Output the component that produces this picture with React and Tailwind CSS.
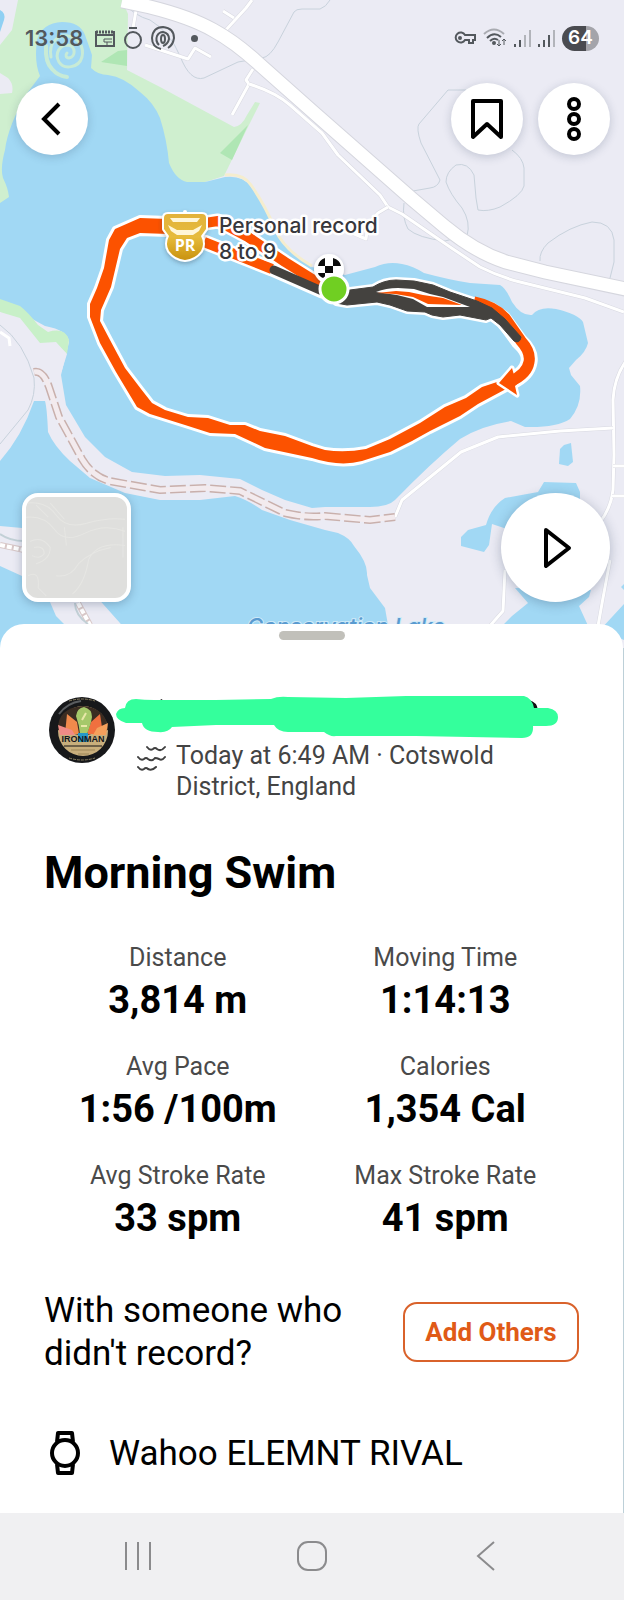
import React from 'react';

const stats = [
    { label: 'Distance', value: '3,814 m' },
    { label: 'Moving Time', value: '1:14:13' },
    { label: 'Avg Pace', value: '1:56 /100m' },
    { label: 'Calories', value: '1,354 Cal' },
    { label: 'Avg Stroke Rate', value: '33 spm' },
    { label: 'Max Stroke Rate', value: '41 spm' }
];

const MAIN_ROAD = 'M122 1 L150 7 Q190 17 213 30 Q235 42 258 63 L312 111 L412 199 L444 226 Q475 252 506 262 L545 272 L630 290';
const SIDE_ROADS = [
    'M137 5 L133 28',
    'M252 0 L246 8 L225 31 M223 11 L234 18',
    'M145 45 L188 59 L195 48 L211 57',
    'M253 69 L246 80 L249 84 L232 115',
    'M249 84 Q275 92 290 105 L322 133 L338 155 L380 195 L388 207 L402 214 L450 247 L480 267 Q500 277 520 282 L585 298 L624 312',
    'M388 207 L378 213 L368 224 L366 239 L352 233',
    'M626 361 Q614 378 613 400 L614 455 L613 490 Q611 508 600 522',
    'M613 428 L560 431 L498 437 L461 452 L402 500 L395 517',
    'M505 570 L503 611 L488 628',
    'M610 560 L603 598 L598 626',
    'M613 466 H626 M612 496 H626'
];
const BOUNDARIES = [
    'M122 2 Q135 16 150 20 Q170 32 180 56 Q190 82 204 78 L238 62 L262 58 Q270 57 278 42 L294 12 Q296 9 302 9 L320 9 Q326 7 330 0',
    'M466 90 H448 L419 124 Q416 128 421 143 L440 180 Q438 187 430 188 L413 191',
    'M512 150 Q523 158 524 168 V186 Q522 195 500 207 Q488 212 478 210 L476 198 L474 175 Q468 162 456 165 Q446 172 446 182 Q450 194 462 208 Q471 222 467 236',
    'M404 203 Q402 218 408 229 Q418 238 445 241 L464 236',
    'M540 261 Q539 252 548 243 Q570 226 592 222 Q612 222 614 240 V262 L610 278',
    'M0 325 Q24 342 34 378 Q36 395 28 410 L0 444'
];
const TRACK = 'M34 372 Q43 370 49 387 L59 417 L82 459 Q92 476 109 481 L160 490 L205 488 L240 491 L285 513 Q305 518 325 516 L370 520 L395 517';
const LOOP =
    'M168 219 L140 218 L115 229 L109 240 L104 268 L97 288 L90 304 L90 317 L100 343 L116 372 L137 407 L150 414 L185 425 L210 433 L235 434 L265 448 L312 458 Q340 467 362 461 L390 452 L412 441 L430 431 L460 416 L478 404 L506 389 L503 380 L482 387 L466 398 L445 407 L420 423 L390 439 L366 449 Q345 453 325 450 L312 446 L285 436 L260 431 L245 425 L230 425 L208 418 L188 417 L165 410 L152 403 L141 389 L125 368 L110 340 L100 321 L101 310 L111 287 L120 249 L127 238 L140 233 L168 234 Z';
const DARK_LEG =
    'M338 293 L350 290 L373 287 Q384 280 396 280 L414 281 L433 285 L450 292 L477 301 L492 308 L505 319 L521 337 Q520 344 514 341 L500 325 L491 318 L486 320 L460 315 L443 317 L432 315 L425 312 L407 311 L390 305 L377 302 L347 305 L336 303 Z';

const IconButton = ({ label, children }) => (
    <button
        aria-label={label}
        className="flex size-[72px] items-center justify-center rounded-full bg-white shadow-[0_2px_10px_rgba(40,60,90,0.22)]"
    >
        {children}
    </button>
);

const RouteMap = () => (
    <svg
        className="absolute inset-0 size-full"
        viewBox="0 0 624 648"
        preserveAspectRatio="xMidYMin slice"
        role="img"
        aria-label="Swim route"
    >
        <defs>
            <linearGradient id="gold" x1="0" y1="0" x2="0" y2="1">
                <stop offset="0" stopColor="#e2b23a" />
                <stop offset="0.5" stopColor="#e6bb3c" />
                <stop offset="1" stopColor="#c9920f" />
            </linearGradient>
            <filter id="drop" x="-30%" y="-30%" width="160%" height="170%">
                <feDropShadow dx="0" dy="2" stdDeviation="2" floodColor="#345" floodOpacity="0.35" />
            </filter>
        </defs>

        <rect width="624" height="648" fill="#ebebf4" />

        {/* Parkland */}
        <path d="M18 0 L122 0 L128 14 L127 70 L160 87 L234 127 Q242 126 247 115 L255 102 L260 103 L245 133 L224 176 L180 190 L0 210 V94 L12 93 Q14 84 8 78 L0 73 V45 L12 30 Z" fill="#cfefcf" />
        <path d="M101 62 L118 51 L127 50 V66 Z M248 125 L232 160 L220 153 L230 143 Z" fill="#afe6b4" />
        <path d="M0 10 Q6 13 4 20 L0 32 Z" fill="#8fd0f3" />

        {/* Main lake */}
        <path
            d="M37 40 Q42 23 62 22 Q80 22 85 35 Q89 46 92 55 L91 68 Q98 75 108 75 Q124 77 140 92 Q154 103 160 118 Q167 140 169 163 Q176 180 187 182 L205 182 L225 177 Q243 175 251 187 Q265 205 275 229 Q284 250 312 267 L345 275 L375 267 Q388 261 402 264 Q413 266 424 273 Q450 280 470 283 L500 285 Q506 288 512 302 Q521 316 532 315 Q539 306 556 309 Q578 314 583 322 L588 343 Q586 352 576 360 L569 368 L571 375 L580 386 Q582 405 570 419 Q556 428 525 427 L511 421 Q480 426 460 439 Q430 464 395 500 Q388 507 370 507 L325 507 L312 508 L285 500 L262 490 L240 479 L200 475 L165 476 L132 472 L105 457 L85 437 L66 405 L61 375 L69 342 Q68 330 45 326 L25 315 L0 300 V203 L9 197 Q8 188 3 178 Q0 168 5 150 Q8 125 28 92 L40 76 Q34 62 37 40 Z"
            fill="#a1d8f4"
        />
        <path d="M46 46 Q45 62 52 69 Q58 76 67 77" fill="none" stroke="#c8ebd6" strokeWidth="4" strokeLinecap="round" />
        <path d="M51 57 C48 40 60 35 68 36 C80 38 84 48 82 57 C79 68 64 70 59 62 C54 53 60 45 68 45 C76 46 76 57 69 58 C66 58 65 55 67 53" fill="none" stroke="#c8ebd6" strokeWidth="3" strokeLinecap="round" />
        <path d="M225 175 Q243 173 251 185 Q265 205 275 229 Q284 250 312 266" fill="none" stroke="#f5edce" strokeWidth="3" />

        {/* West shore */}
        <path d="M0 299 L20 306 Q28 312 38 325 L48 332 Q65 327 69 340 L67 354 L55 343 L41 345 L25 328 L0 312 Z" fill="#c8f0c8" />
        <path d="M0 312 L20 318 L40 343 L56 342 L67 354 L62 370 L50 400 L0 470 Z" fill="#ebebf4" />

        {/* Conservation Lake */}
        <path d="M0 461 Q22 436 34 401 L45 401 Q47 408 48 432 Q54 446 70 461 L90 478 L125 493 L160 500 L200 500 L235 496 Q248 500 262 510 L290 520 L325 530 L338 533 Q350 538 354 546 Q368 563 367 575 L370 588 L385 608 L392 648 H0 Z" fill="#a1d8f4" />
        <path d="M0 526 L22 528 L95 595 L128 632 L72 632 L56 616 L50 602 L22 576 L0 566 Z" fill="#ebebf4" />

        {/* Ponds */}
        <path d="M560 449 L564 445 L571 443 L573 462 L568 466 L559 464 Z" fill="#a1d8f4" />
        <path d="M461 537 L468 530 L486 525 Q491 507 505 498 L538 492 L544 482 L576 483 L580 492 V530 L510 530 L492 524 L489 545 L484 552 L461 546 Z" fill="#a1d8f4" />
        <path d="M515 588 L591 590 L589 597 L579 606 L590 630 H498 L512 616 L528 603 Z M600 630 L624 604 V640 Z M621 587 L624 584 V590 Z" fill="#a1d8f4" />

        {BOUNDARIES.map((d) => (
            <path key={d} d={d} fill="none" stroke="#c8d2dc" strokeWidth="1" />
        ))}
        {SIDE_ROADS.map((d) => (
            <g key={d} fill="none" strokeLinejoin="round">
                <path d={d} stroke="#d8d9e1" strokeWidth="4" />
                <path d={d} stroke="#fff" strokeWidth="3" />
            </g>
        ))}
        <path d={MAIN_ROAD} fill="none" stroke="#d5d6de" strokeWidth="15" />
        <path d={MAIN_ROAD} fill="none" stroke="#fff" strokeWidth="13" />

        {/* Gravel track */}
        <path d={TRACK} fill="none" stroke="#c9b0ac" strokeWidth="8" strokeDasharray="16 4" />
        <path d={TRACK} fill="none" stroke="#f3ebee" strokeWidth="5" />
        <path d="M0 545 L24 550 M78 603 L90 625" fill="none" stroke="#d8c8c8" strokeWidth="6" />
        <path d="M0 545 L24 550 M78 603 L90 625" fill="none" stroke="#fff" strokeWidth="4" strokeDasharray="5 2" />
        <path d="M0 534 Q10 541 24 541 M75 603 Q75 615 88 624" fill="none" stroke="#c2d0d6" strokeWidth="2" />
        <path d="M0 332 L9 338 L10 346" fill="none" stroke="#fff" strokeWidth="3" />

        <text x="247" y="634" className="font-['Inter'] text-[22px] font-medium italic" fill="#5a9bd0" stroke="#cfeaf8" strokeWidth="2" paintOrder="stroke">
            Conservation Lake
        </text>

        {/* White casing under the route */}
        <g fill="none" stroke="#fff" strokeLinejoin="round" strokeLinecap="round">
            <path d={LOOP} strokeWidth="6" />
            <path d="M205 223 L218 221 L248 237 L285 262 L325 287 M204 242 L272 269 L322 291" strokeWidth="15" />
            <path d="M490 310 L503 319 L519 341 Q531 352 529 362 Q527 374 510 382" strokeWidth="17" />
            <path d={DARK_LEG} strokeWidth="6" />
        </g>
        {/* Route */}
        <path d={LOOP} fill="#fc5200" />
        <path d="M512 368 L499 383 L517 395 L515 386 L522 380 L514 375 Z" fill="#fc5200" stroke="#fff" strokeWidth="5" strokeLinejoin="round" paintOrder="stroke" />
        <g fill="none" stroke="#fc5200" strokeWidth="10" strokeLinejoin="round">
            <path d="M205 223 L218 221 L248 237 L285 262 L325 287 M204 242 L272 269" />
            <path d="M474 302 Q494 306 505 318 L521 341 Q531 352 529 362 Q527 374 511 381" strokeWidth="11" />
        </g>
        <g fill="#44423f" stroke="#44423f" strokeLinecap="round" strokeLinejoin="round">
            <path d="M274 270 L322 291" strokeWidth="9" />
            <path d={DARK_LEG} strokeWidth="1" />
        </g>
        <path d="M376 292 Q386 288 398 288 L414 289 L430 294 L443 297 L470 307 L427 307 L413 299 L397 295 Z" fill="#fff" />
        <path d="M377 293 L396 291 L409 292 L423 295 L443 298 L462 305 L428 304 L413 297 L395 294 Z" fill="#fc5200" />

        {/* Finish and start */}
        <g filter="url(#drop)">
            <circle cx="329" cy="269" r="15" fill="#fff" />
        </g>
        <path d="M325 266 H333 V273 H325 Z M325 266 H318 Q319 260 325 258 Z M333 266 V258 Q340 260 341 266 Z M325 273 V279 L321 277 Q318 275 318 273 Z" fill="#0b0b0b" />
        <circle cx="334" cy="289" r="14" fill="#70cf22" stroke="#fff" strokeWidth="3" />

        {/* PR badge */}
        <g filter="url(#drop)">
            <circle cx="185" cy="212" r="2" fill="#fff" />
            <path d="M168 214 H202 Q206 214 206 218 V229 L201 236 Q205 244 201 251 Q195 259 185 260 Q175 259 169 251 Q165 244 169 236 L164 229 V218 Q164 214 168 214 Z" fill="url(#gold)" stroke="#fff" strokeWidth="4" strokeLinejoin="round" paintOrder="stroke" />
        </g>
        <path d="M170 218 H200 L197 222 H173 Z M168 225 L177 230 H193 L202 225 L199 231 L193 235 H177 L171 231 Z" fill="#fff6d8" />
        <text x="185" y="251" textAnchor="middle" className="font-['Open_Sans'] text-[16px] font-bold" fill="#fff">PR</text>

        <g className="font-['Inter'] text-[21px] font-medium" fill="#37373c" stroke="#fff" strokeWidth="5" strokeLinejoin="round" paintOrder="stroke">
            <text x="219" y="233">Personal record</text>
            <text x="219" y="259">8 to 9</text>
        </g>
    </svg>
);

const StatusBar = () => (
    <div className="flex h-[76px] items-center justify-between px-[25px] text-[#53585d]">
        <div className="flex items-center gap-2">
            <span className="mr-1 font-['Inter'] text-[22px] font-semibold">13:58</span>
            <svg width="20" height="18" viewBox="0 0 20 18" fill="none" stroke="currentColor" strokeWidth="2">
                <path d="M1 2 V17 H19 V2 M1 6 H19" />
                <path d="M1 3 H19" strokeWidth="3" strokeDasharray="2 1" />
                <path d="M9 10 H17 M12 13 H17" strokeWidth="1" />
                <path d="M9 10 V13 H12 V16" strokeWidth="1" />
            </svg>
            <svg width="20" height="22" viewBox="0 0 20 22" fill="none" stroke="currentColor" strokeWidth="2">
                <path d="M6 1 H14" />
                <circle cx="10" cy="13" r="8" />
            </svg>
            <svg width="24" height="24" viewBox="0 0 24 24" fill="none" stroke="currentColor" strokeWidth="2">
                <path d="M10 23 Q1 21 1 12 Q2 1 12 1 Q23 2 23 12 Q22 19 17 22" />
                <path d="M8 19 Q4 15 6 10 Q8 6 12 6 Q18 7 18 13 Q17 18 12 20" />
                <ellipse cx="12" cy="13" rx="2" ry="4" />
            </svg>
            <span className="ml-2 size-[7px] rounded-full bg-current" />
        </div>
        <div className="flex items-center gap-[7px]">
            <svg width="22" height="14" viewBox="0 0 22 14" fill="none" stroke="currentColor" strokeWidth="2">
                <path d="M11 4 H21 V9 H19 V12 H15 V9 H11 A5 5 0 1 1 11 4 Z" />
                <circle cx="6" cy="7" r="1" />
            </svg>
            <svg width="24" height="20" viewBox="0 0 24 20" fill="none" stroke="currentColor" strokeWidth="2">
                <path d="M1 6 Q11 -3 21 6" stroke="#a9abb1" />
                <path d="M4 10 Q11 3 18 9 M7 13 Q11 9 15 12" />
                <circle cx="11" cy="15" r="1" />
                <path d="M16 12 V18 M14 16 L16 18 L18 16 M21 17 V11 M19 13 L21 11 L23 13" strokeWidth="1" />
            </svg>
            {[0, 1].map((n) => (
                <svg key={n} width="17" height="18" viewBox="0 0 17 18" stroke="currentColor" strokeWidth="2">
                    <path d="M1 18 V15 M6 18 V11" />
                    <path d="M11 18 V6" stroke={n ? 'currentColor' : '#b2b4ba'} />
                    <path d="M16 18 V1" stroke="#b2b4ba" />
                </svg>
            ))}
            <span className="flex h-[25px] w-[37px] items-center justify-center rounded-full bg-linear-to-r from-[#4a4b50] from-64% to-[#a4a4aa] to-64% font-['Inter'] text-[19px] font-semibold text-white">
                64
            </span>
        </div>
    </div>
);

const TerrainThumb = () => (
    <button
        aria-label="Map style"
        className="size-[109px] overflow-hidden rounded-2xl border-4 border-white bg-[#dfdfdd] shadow-[0_2px_10px_rgba(40,60,90,0.3)]"
    >
        <svg viewBox="0 0 100 100" className="size-full" fill="none" stroke="#e6e6e3" strokeWidth="1">
            <path d="M2 6 Q20 4 30 18 T60 26 T98 22 M0 20 Q18 18 28 32 T58 36 T98 34 M38 30 L40 48 M96 30 V60" />
            <path d="M4 44 Q16 38 24 50 Q24 62 10 66 M8 50 Q18 48 18 56 Q14 62 6 58 M2 78 Q14 72 12 90 L20 98" />
            <path d="M98 48 Q70 44 62 62 Q58 86 46 96 M84 50 Q64 54 52 66 Q44 80 30 78 M10 8 L22 20 M24 6 L38 22" />
        </svg>
    </button>
);

const Avatar = () => (
    <svg width="67" height="68" viewBox="0 0 67 68" role="img" aria-label="Athlete photo" className="shrink-0">
        <circle cx="33" cy="34" r="33" fill="#17181a" />
        <path d="M10 18 Q18 7 32 5" fill="none" stroke="#5a5d60" strokeWidth="2" />
        <circle cx="34" cy="35" r="25" fill="#c8ae7c" />
        <path d="M9 34 Q8 12 34 10 Q58 12 59 34 L34 40 Z" fill="#3a2c22" />
        <path d="M18 18 L28 26 L30 38 H16 Z" fill="#f08a4c" />
        <path d="M51 18 L42 26 L38 38 H54 Z" fill="#f0703f" />
        <path d="M9 29 L23 34 L26 39 H11 Z" fill="#f08b86" />
        <path d="M59 27 L48 32 L44 39 H57 Z" fill="#f5a05c" />
        <path d="M27 20 Q28 12 35 11 Q43 13 43 21 Q42 28 38 38 H31 Q30 28 27 20 Z" fill="#a5c86a" />
        <path d="M33 24 L37 17 M32 30 H38" stroke="#e8e8a8" strokeWidth="2" />
        <rect x="29" y="37" width="10" height="9" fill="#2598c8" />
        <text x="34" y="46" textAnchor="middle" className="font-['Liberation_Sans'] text-[9px] font-bold" fill="#15161c">
            IRONMAN
        </text>
        <path d="M15 50 H53" stroke="#6e6048" strokeWidth="2" />
        <path d="M22 54 H46 M29 58 H40" stroke="#9d8658" strokeWidth="1" />
        <path d="M20 5 Q33 1 46 5 M20 62 Q33 66 46 62" fill="none" stroke="#8d8264" strokeWidth="1" strokeDasharray="3 1" />
    </svg>
);

const HiddenName = () => (
    <svg viewBox="0 0 442 44" className="h-11 w-full max-w-[442px]" aria-hidden="true">
        <path d="M44 4 L46 3 L47 6 Z M413 4 Q421 6 422 14 L416 18 Z" fill="#111" />
        <path
            d="M9 12 Q10 3 20 3 Q28 4 38 4 L100 4 L155 3 Q162 0 172 1 L230 2 L290 0 L408 0 Q416 2 418 12 L432 12 Q442 14 442 21 Q442 30 430 30 L417 30 Q418 42 406 42 L300 40 L220 40 Q214 41 208 36 L172 36 Q162 36 158 29 L100 29 L56 31 Q52 37 42 36 Q28 36 26 27 L10 27 Q0 24 0 18 Q2 12 9 12 Z"
            fill="#34ff9c"
        />
    </svg>
);

const Waves = () => (
    <svg width="30" height="26" viewBox="0 0 30 26" fill="none" stroke="#3f3f3f" strokeWidth="2" strokeLinecap="round" className="mt-[5px] shrink-0">
        <path d="M10 2 Q13 6 16 4 Q18 2 20 4 Q24 7 28 2" />
        <path d="M1 12 Q4 16 7 14 Q9 12 11 14 Q15 17 18 13 Q20 13 22 14 Q25 16 28 12" />
        <path d="M1 22 Q4 26 7 24 Q9 22 11 24 Q15 26 19 22" />
    </svg>
);

const App = () => {
    return (
        <div className="flex min-h-screen flex-col bg-[#bdd0d8] font-['Roboto',sans-serif]">
            <section className="relative flex aspect-[624/648] w-full flex-col justify-between overflow-hidden">
                <RouteMap />
                <header className="relative">
                    <StatusBar />
                    <div className="flex items-center justify-between pt-[7px] pr-[14px] pl-4">
                        <IconButton label="Back">
                            <svg width="24" height="36" viewBox="0 0 24 36" fill="none" stroke="#000" strokeWidth="4">
                                <path d="M19 3 L4 18 L19 33" />
                            </svg>
                        </IconButton>
                        <div className="flex gap-[15px]">
                            <IconButton label="Save">
                                <svg width="34" height="42" viewBox="0 0 34 42" fill="none" stroke="#000" strokeWidth="4" strokeLinejoin="round">
                                    <path d="M3 3 H31 V39 L17 26 L3 39 Z" />
                                </svg>
                            </IconButton>
                            <IconButton label="More options">
                                <svg width="14" height="44" viewBox="0 0 14 44" fill="none" stroke="#000" strokeWidth="4">
                                    <circle cx="7" cy="7" r="5" />
                                    <circle cx="7" cy="22" r="5" />
                                    <circle cx="7" cy="37" r="5" />
                                </svg>
                            </IconButton>
                        </div>
                    </div>
                </header>
                <div className="relative flex items-center justify-between pr-[14px] pb-[46px] pl-[22px]">
                    <TerrainThumb />
                    <button
                        aria-label="Play route"
                        className="flex size-[109px] items-center justify-center rounded-full bg-white shadow-[0_2px_12px_rgba(40,60,90,0.3)]"
                    >
                        <svg width="30" height="42" viewBox="0 0 30 42" fill="none" stroke="#000" strokeWidth="4" strokeLinejoin="round" className="ml-1">
                            <path d="M3 3 L26 21 L3 39 Z" />
                        </svg>
                    </button>
                </div>
            </section>

            {/* Activity sheet */}
            <main className="relative -mt-6 mr-px grow rounded-t-[24px] bg-white px-11 pt-[7px] pb-[35px]">
                <div className="mx-auto h-[9px] w-[66px] rounded-full bg-[#c1c0ba]" />

                <div className="mt-[56px] flex items-start pl-[5px]">
                    <Avatar />
                    <div className="min-w-0 flex-1">
                        <HiddenName />
                        <div className="flex gap-[9px] pl-[21px]">
                            <Waves />
                            <p className="text-[25px] leading-[31px] text-[#444444]">
                                Today at 6:49 AM · Cotswold
                                <br />
                                District, England
                            </p>
                        </div>
                    </div>
                </div>

                <h1 className="mt-[43px] text-[45px] leading-[56px] font-bold text-black">Morning Swim</h1>

                <dl className="mt-[41px] grid grid-cols-2 gap-y-[29px] text-center">
                    {stats.map((stat) => (
                        <div key={stat.label}>
                            <dt className="text-[25px] leading-8 text-[#4a4a4a]">{stat.label}</dt>
                            <dd className="mt-1 text-[38px] leading-[44px] font-bold text-black">{stat.value}</dd>
                        </div>
                    ))}
                </dl>

                <div className="mt-[49px] flex items-center justify-between">
                    <p className="max-w-[320px] text-[35px] leading-[43px] text-black">With someone who didn't record?</p>
                    <button className="h-[60px] w-[176px] rounded-[14px] border-2 border-[#d9622b] text-[26px] font-bold text-[#e05a17]">
                        Add Others
                    </button>
                </div>

                <div className="mt-[56px] flex items-center gap-[29px] pl-[6px]">
                    <svg width="30" height="44" viewBox="0 0 30 44" fill="none" stroke="#000" strokeWidth="4" strokeLinejoin="round">
                        <circle cx="15" cy="22" r="13" />
                        <path d="M7 11 L8 2 H22 L23 11 M7 33 L8 42 H22 L23 33" />
                    </svg>
                    <span className="text-[35px] leading-[43px] text-black">Wahoo ELEMNT RIVAL</span>
                </div>
            </main>

            <nav className="relative grid h-[87px] grid-cols-[1fr_72px_1fr] items-center bg-[#f0f0f2] pb-[2px] text-[#8b8b8d]">
                <button aria-label="Recent apps" className="flex justify-center">
                    <svg width="28" height="30" viewBox="0 0 28 30" fill="none" stroke="currentColor" strokeWidth="2">
                        <path d="M2 1 V29 M14 1 V29 M26 1 V29" />
                    </svg>
                </button>
                <button aria-label="Home" className="flex justify-center">
                    <svg width="30" height="30" viewBox="0 0 30 30" fill="none" stroke="currentColor" strokeWidth="2">
                        <rect x="1" y="1" width="28" height="28" rx="10" />
                    </svg>
                </button>
                <button aria-label="Navigate back" className="flex justify-center">
                    <svg width="20" height="30" viewBox="0 0 20 30" fill="none" stroke="currentColor" strokeWidth="2">
                        <path d="M18 1 L2 15 L18 29" />
                    </svg>
                </button>
            </nav>
        </div>
    );
};

export default App;
